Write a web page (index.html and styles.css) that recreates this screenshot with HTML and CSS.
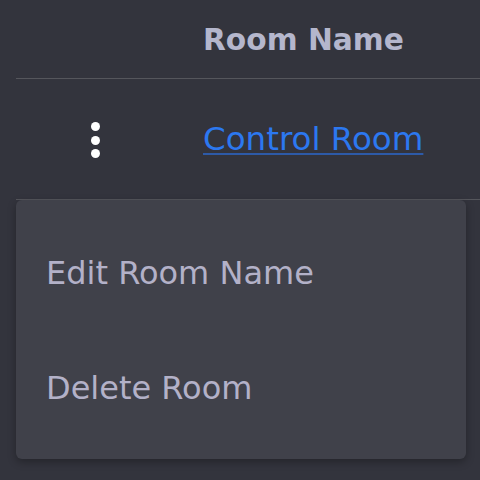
FILE: index.html
```html
<!DOCTYPE html>
<html>
<head>
<meta charset="utf-8">
<link rel="stylesheet" href="styles.css">
</head>
<body>
<div class="page">
  <div class="table">
    <div class="row head">
      <div class="cell actions"></div>
      <div class="cell name">Room Name</div>
    </div>
    <div class="row body">
      <div class="cell actions">
        <span class="kebab"><i></i><i></i><i></i></span>
      </div>
      <div class="cell name"><a href="#" class="link">Control Room</a></div>
    </div>
  </div>
  <div class="menu">
    <div class="item">Edit Room Name</div>
    <div class="item">Delete Room</div>
  </div>
</div>
</body>
</html>
```
FILE: styles.css
```css
html, body {
  margin: 0;
  padding: 0;
  background: #33343d;
  width: 480px;
  height: 480px;
  overflow: hidden;
}
.page {
  position: relative;
  height: 480px;
  padding-left: 16px;
  font-family: "DejaVu Sans", Inter, sans-serif;
}
.table {
  display: flex;
  flex-direction: column;
  width: 480px;
}
.row {
  display: flex;
  align-items: center;
  border-bottom: 1px solid #55565c;
}
.row.head {
  height: 78px;
}
.row.body {
  height: 120px;
}
.actions {
  width: 158px;
  display: flex;
  justify-content: center;
}
.name {
  padding-left: 29px;
}
.head .name {
  color: #b4b6cc;
  font-size: 29.7px;
  font-weight: 700;
}
.kebab {
  display: flex;
  flex-direction: column;
  gap: 4.5px;
  margin-top: 2px;
}
.kebab i {
  display: block;
  width: 9px;
  height: 9px;
  border-radius: 50%;
  background: #ffffff;
}
.link {
  color: #2c78f0;
  font-size: 32.5px;
  text-decoration: underline;
  text-decoration-color: #2d5aa8;
  text-decoration-thickness: 2px;
  text-underline-offset: 3px;
}
.menu {
  position: absolute;
  top: 200px;
  left: 16px;
  width: 450px;
  height: 259px;
  box-sizing: border-box;
  padding: 15px 0 14px;
  background: #40414a;
  border-radius: 6px;
  box-shadow: 0 3px 8px rgba(0,0,0,0.3);
  display: flex;
  flex-direction: column;
}
.item {
  height: 115px;
  display: flex;
  align-items: center;
  padding-left: 30px;
  color: #b3b1c8;
  font-size: 32px;
}
```
